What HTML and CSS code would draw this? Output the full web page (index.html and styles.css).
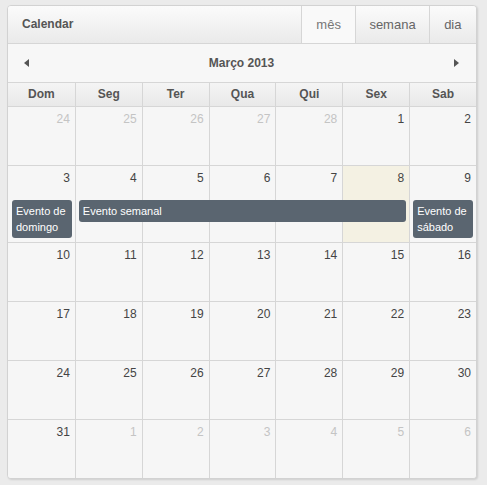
FILE: index.html
```html
<!DOCTYPE html>
<html lang="pt">
<head>
<meta charset="utf-8">
<title>Calendar</title>
<link rel="stylesheet" href="styles.css">
</head>
<body>
<div class="panel">
  <div class="head">
    <div class="title">Calendar</div>
    <div class="tabs">
      <span class="tab active">mês</span>
      <span class="tab wide">semana</span>
      <span class="tab">dia</span>
    </div>
  </div>
  <div class="nav">
    <span class="arrow prev"></span>
    <span class="month">Março 2013</span>
    <span class="arrow next"></span>
  </div>
  <div class="dow">
    <div>Dom</div><div>Seg</div><div>Ter</div><div>Qua</div><div>Qui</div><div>Sex</div><div>Sab</div>
  </div>
  <div class="week">
    <div class="day other">24</div><div class="day other">25</div><div class="day other">26</div><div class="day other">27</div><div class="day other">28</div><div class="day">1</div><div class="day">2</div>
  </div>
  <div class="week">
    <div class="day">3</div><div class="day">4</div><div class="day">5</div><div class="day">6</div><div class="day">7</div><div class="day today">8</div><div class="day">9</div>
    <div class="event c1">Evento de domingo</div>
    <div class="event c2-6">Evento semanal</div>
    <div class="event c7">Evento de sábado</div>
  </div>
  <div class="week">
    <div class="day">10</div><div class="day">11</div><div class="day">12</div><div class="day">13</div><div class="day">14</div><div class="day">15</div><div class="day">16</div>
  </div>
  <div class="week">
    <div class="day">17</div><div class="day">18</div><div class="day">19</div><div class="day">20</div><div class="day">21</div><div class="day">22</div><div class="day">23</div>
  </div>
  <div class="week">
    <div class="day">24</div><div class="day">25</div><div class="day">26</div><div class="day">27</div><div class="day">28</div><div class="day">29</div><div class="day">30</div>
  </div>
  <div class="week">
    <div class="day">31</div><div class="day other">1</div><div class="day other">2</div><div class="day other">3</div><div class="day other">4</div><div class="day other">5</div><div class="day other">6</div>
  </div>
</div>
</body>
</html>
```
FILE: styles.css
```css
html, body {
  margin: 0;
  padding: 0;
}
body {
  background: #ebebeb;
  padding: 5px 7px;
  font-family: "Liberation Sans", Arial, Helvetica, sans-serif;
  color: #555;
}
.panel {
  width: 468px;
  border: 1px solid #d2d2d2;
  border-radius: 4px;
  background: #f6f6f6;
  box-shadow: 1px 1px 2px rgba(0,0,0,0.12);
  overflow: hidden;
}
.head {
  display: flex;
  justify-content: space-between;
  height: 37px;
  border-bottom: 1px solid #d6d6d6;
  background: linear-gradient(#fbfbfb, #eaeaea);
}
.title {
  font-size: 12px;
  font-weight: bold;
  color: #555;
  line-height: 37px;
  padding-left: 14px;
}
.tabs {
  display: flex;
}
.tab {
  font-size: 13px;
  line-height: 37px;
  padding: 0 14.5px;
  border-left: 1px solid #d6d6d6;
  color: #666;
}
.tab.wide {
  padding: 0 13px;
}
.tab.active {
  background: #f9f9f9;
  color: #777;
}
.nav {
  height: 38px;
  border-bottom: 1px solid #d6d6d6;
  background: #f7f7f7;
  display: flex;
  align-items: center;
  justify-content: space-between;
  padding: 0 17px 0 16px;
}
.month {
  font-size: 12px;
  font-weight: bold;
  color: #555;
}
.arrow {
  width: 0;
  height: 0;
  border-top: 4.5px solid transparent;
  border-bottom: 4.5px solid transparent;
}
.prev { border-right: 5px solid #555; }
.next { border-left: 5px solid #555; }
.dow {
  display: grid;
  grid-template-columns: repeat(7, 1fr);
  height: 23px;
  background: linear-gradient(#f4f4f4, #e9e9e9);
  border-bottom: 1px solid #d6d6d6;
}
.dow div {
  font-size: 12px;
  font-weight: bold;
  color: #555;
  text-align: center;
  line-height: 23px;
  border-left: 1px solid #d6d6d6;
}
.dow div:first-child { border-left: none; }
.week {
  display: grid;
  grid-template-columns: repeat(7, 1fr);
  grid-template-rows: 34px auto;
  min-height: 58px;
  border-top: 1px solid #d6d6d6;
}
.dow + .week { border-top: none; }
.day {
  grid-row: 1 / 3;
  font-size: 12px;
  color: #444;
  text-align: right;
  padding: 4px 5px 0 0;
  line-height: 16px;
  border-left: 1px solid #d6d6d6;
  background: #f6f6f6;
}
.day:first-child { border-left: none; }
.day:nth-child(1) { grid-column: 1; }
.day:nth-child(2) { grid-column: 2; }
.day:nth-child(3) { grid-column: 3; }
.day:nth-child(4) { grid-column: 4; }
.day:nth-child(5) { grid-column: 5; }
.day:nth-child(6) { grid-column: 6; }
.day:nth-child(7) { grid-column: 7; }
.day.other { color: #c4c4c4; }
.day.today { background: #f4f1e3; }
.event {
  grid-row: 2;
  align-self: start;
  z-index: 1;
  background: #5a6570;
  color: #fff;
  font-size: 11px;
  line-height: 16px;
  padding: 3px 4px;
  border-radius: 3px;
  margin: 0 3px 4px 4px;
}
.c1 { grid-column: 1; }
.c2-6 { grid-column: 2 / 7; }
.c7 { grid-column: 7; }
```
